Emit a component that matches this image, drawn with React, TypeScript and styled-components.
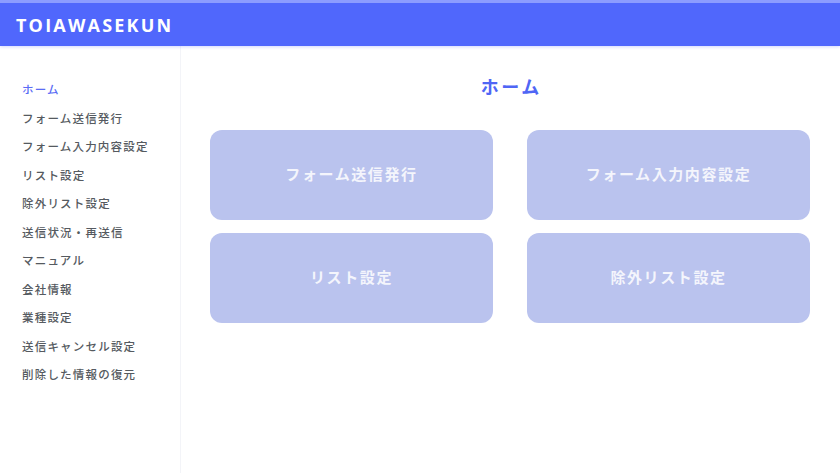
import { createGlobalStyle, styled } from 'styled-components';

const GlobalStyle = createGlobalStyle`
  html, body {
    margin: 0;
    padding: 0;
    background: #ffffff;
    font-family: 'Noto Sans', 'Noto Sans CJK JP', sans-serif;
  }
`;

const menuItems = [
  'ホーム',
  'フォーム送信発行',
  'フォーム入力内容設定',
  'リスト設定',
  '除外リスト設定',
  '送信状況・再送信',
  'マニュアル',
  '会社情報',
  '業種設定',
  '送信キャンセル設定',
  '削除した情報の復元',
];

const cards = ['フォーム送信発行', 'フォーム入力内容設定', 'リスト設定', '除外リスト設定'];

export default function App() {
  return (
    <>
      <GlobalStyle />
      <Page>
        <Header>
          <Logo>TOIAWASEKUN</Logo>
        </Header>
        <Layout>
          <Sidebar>
            {menuItems.map((item, i) => (
              <MenuItem key={item} active={i === 0}>
                {item}
              </MenuItem>
            ))}
          </Sidebar>
          <Main>
            <Title>ホーム</Title>
            <CardGrid>
              {cards.map((card) => (
                <Card key={card}>{card}</Card>
              ))}
            </CardGrid>
          </Main>
        </Layout>
      </Page>
    </>
  );
}

const Page = styled.div`
  width: 840px;
  height: 473px;
  display: flex;
  flex-direction: column;
  overflow: hidden;
`;

const Header = styled.header`
  height: 43px;
  border-top: 3px solid #8c9cff;
  background: #5067fc;
  display: flex;
  align-items: center;
  padding: 0 16px;
  box-shadow: 0 1px 3px rgba(80, 103, 252, 0.25);
  z-index: 1;
`;

const Logo = styled.h1`
  margin: 0;
  color: #ffffff;
  font-family: 'Open Sans', 'Noto Sans', sans-serif;
  font-size: 18px;
  font-weight: 700;
  letter-spacing: 2.2px;
`;

const Layout = styled.div`
  flex: 1;
  display: flex;
`;

const Sidebar = styled.nav`
  width: 181px;
  border-right: 1px solid #f3f4f8;
  padding: 37px 0 0 22px;
  box-sizing: border-box;
  display: flex;
  flex-direction: column;
`;

const MenuItem = styled.div<{ active?: boolean }>`
  height: 28.5px;
  font-size: 11.5px;
  line-height: 14px;
  font-weight: 500;
  letter-spacing: 1.2px;
  color: ${({ active }) => (active ? '#5a6cf5' : '#555a60')};
`;

const Main = styled.main`
  flex: 1;
  padding: 28px 30px 0 29px;
  display: flex;
  flex-direction: column;
  align-items: center;
`;

const Title = styled.h2`
  margin: 0 0 30px;
  font-size: 18px;
  line-height: 26px;
  font-weight: 700;
  color: #4f66f5;
  letter-spacing: 2.5px;
  text-indent: 2.5px;
`;

const CardGrid = styled.div`
  width: 100%;
  display: grid;
  grid-template-columns: 1fr 1fr;
  column-gap: 34px;
  row-gap: 13px;
`;

const Card = styled.div`
  height: 90px;
  padding-bottom: 3px;
  box-sizing: border-box;
  border-radius: 12px;
  background: #bac3ee;
  display: flex;
  align-items: center;
  justify-content: center;
  color: #f4f5fc;
  font-size: 15px;
  font-weight: 700;
  letter-spacing: 1.6px;
`;
